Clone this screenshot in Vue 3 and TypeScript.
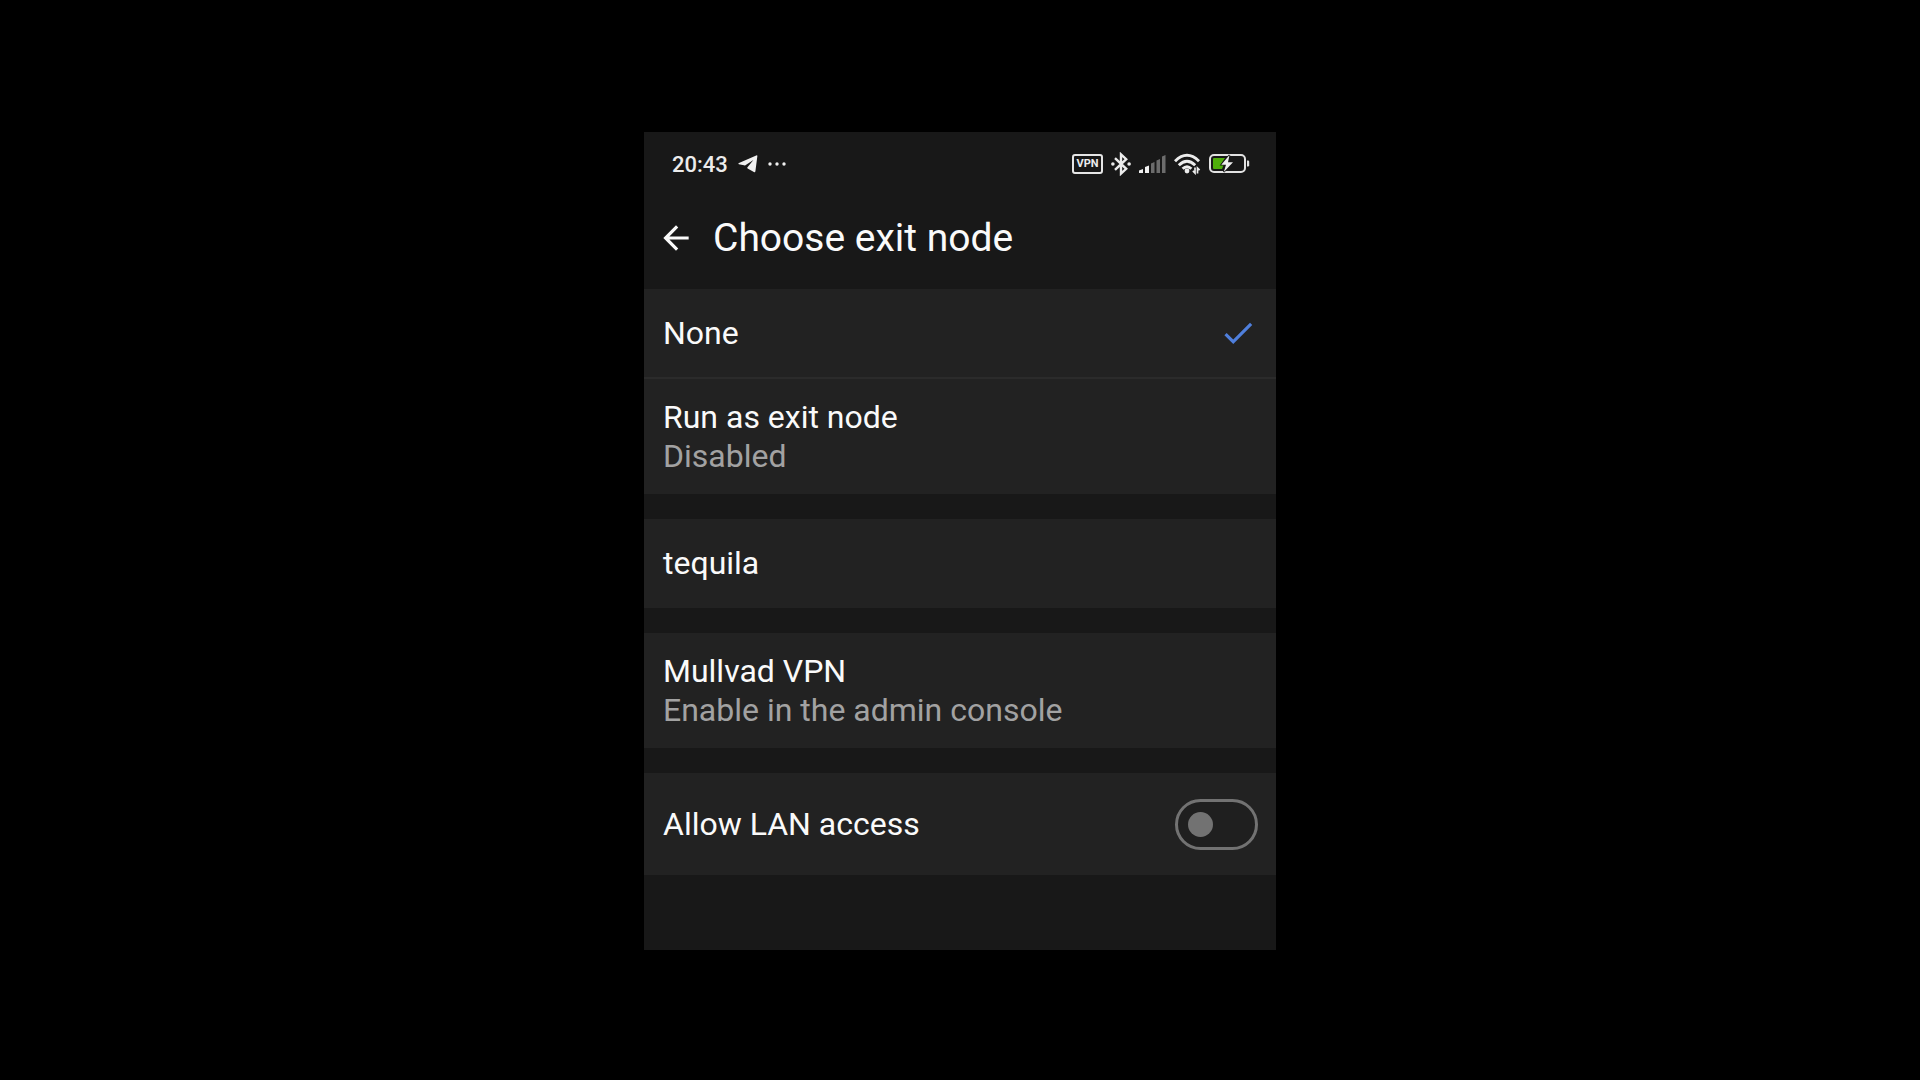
<script setup lang="ts">
import { ref } from 'vue'

interface ExitOption {
  id: string
  title: string
  detail?: string
}

const groups: ExitOption[][] = [
  [
    { id: 'none', title: 'None' },
    { id: 'self', title: 'Run as exit node', detail: 'Disabled' },
  ],
  [{ id: 'tequila', title: 'tequila' }],
  [{ id: 'mullvad', title: 'Mullvad VPN', detail: 'Enable in the admin console' }],
]

const selected = ref('none')
const allowLan = ref(false)
</script>

<template>
  <main class="stage">
    <section class="screen">
      <div class="status">
        <time class="clock">20:43</time>
        <svg class="telegram" width="20" height="18" viewBox="0 0 20 18" aria-hidden="true">
          <path d="M19.4 0.8 L17.4 16.2 Q17.1 17.6 15.9 17 L9.6 13.4 Q8.9 12.9 9.5 12.2 L15.4 5 L7.4 10.2 Q6.8 10.6 6 10.3 L0.8 9.2 Q-0.2 8.5 1 7.9 L18.2 0.4 Q19.5 0 19.4 0.8Z" fill="#f0f0f0" />
        </svg>
        <svg class="dots" width="20" height="4" viewBox="0 0 20 4" aria-hidden="true">
          <g fill="#f0f0f0"><circle cx="2" cy="2" r="1.7" /><circle cx="9" cy="2" r="1.7" /><circle cx="16" cy="2" r="1.7" /></g>
        </svg>
        <div class="indicators">
          <span class="vpn">VPN</span>
          <svg width="20" height="24" viewBox="0 0 20 24" aria-hidden="true">
            <path d="M4 6.2 L15.2 16.8 L10 21.6 V2.4 L15.2 7.2 L4 17.8" fill="none" stroke="#ececec" stroke-width="2.4" stroke-linejoin="miter" />
            <circle cx="1.9" cy="12" r="1.8" fill="#ececec" /><circle cx="18.1" cy="12" r="1.8" fill="#ececec" />
          </svg>
          <svg width="27" height="20" viewBox="0 0 27 20" aria-hidden="true">
            <g fill="#f0f0f0"><path d="M0 16.5 L4 15 V19 H0Z" /><path d="M6 13 L10 11.5 V19 H6Z" /></g>
            <g fill="#6c6c6c"><path d="M12 9.5 L15.5 8 V19 H12Z" /><path d="M17.5 6.5 L21 5 V19 H17.5Z" /><path d="M23 2.5 L26.5 1 V19 H23Z" /></g>
          </svg>
          <svg width="27" height="22" viewBox="0 0 27 22" aria-hidden="true">
            <g fill="none" stroke="#ececec" stroke-width="2.9">
              <path d="M1 8.2 Q13 -3.6 25 8.2" /><path d="M4.8 12.2 Q13 4.2 21.2 12.2" /><path d="M8.6 15.8 Q13 11.6 17.4 15.8" />
            </g>
            <circle cx="13" cy="18" r="2.4" fill="#ececec" />
            <path d="M21 14.5 V20 L18.9 17.8 M23.5 20.5 V15 L25.6 17.2" fill="none" stroke="#ececec" stroke-width="1.7" />
          </svg>
          <svg width="41" height="20" viewBox="0 0 41 20" aria-hidden="true">
            <rect x="1" y="1" width="35" height="17" rx="4" fill="none" stroke="#e2e2e2" stroke-width="2" />
            <path d="M38 6.5 h1 q1.2 0 1.2 1.2 v3.6 q0 1.2 -1.2 1.2 h-1z" fill="#e2e2e2" />
            <path d="M5 4 H16 L12 10 H15 L13 15 H5 Q4 15 4 14 V5 Q4 4 5 4Z" fill="#4fae0b" />
            <path d="M20.5 1 L12.3 10.8 H17 L14.8 18 L24 8.2 H19Z" fill="#f0f0f0" stroke="#181818" stroke-width="1.6" paint-order="stroke" />
          </svg>
        </div>
      </div>

      <header class="bar">
        <button class="back" type="button" aria-label="Back">
          <svg width="38" height="38" viewBox="0 0 24 24" aria-hidden="true">
            <path d="M20 11H7.83l5.59-5.59L12 4l-8 8 8 8 1.41-1.41L7.83 13H20v-2z" fill="#fafafa" />
          </svg>
        </button>
        <h1>Choose exit node</h1>
      </header>

      <div class="groups">
        <div v-for="(group, i) in groups" :key="i" class="group">
          <button v-for="item in group" :key="item.id" type="button" class="row" :class="{ tall: item.detail }" @click="selected = item.id">
            <span class="texts">
              <span class="title">{{ item.title }}</span>
              <span v-if="item.detail" class="detail">{{ item.detail }}</span>
            </span>
            <svg v-if="selected === item.id" width="38" height="38" viewBox="0 0 24 24" aria-hidden="true">
              <path d="M9 16.17L4.83 12l-1.42 1.41L9 19 21 7l-1.41-1.41z" fill="#4f7fdc" />
            </svg>
          </button>
        </div>
        <div class="group">
          <label class="row lan" for="lan">
            <span class="title">Allow LAN access</span>
            <input id="lan" v-model="allowLan" class="switch" type="checkbox" role="switch" />
          </label>
        </div>
      </div>
    </section>
  </main>
</template>

<style>
body {
  margin: 0;
  background: #000;
}
</style>

<style scoped>
.stage {
  box-sizing: border-box;
  min-height: 100vh;
  padding: 132px 16px 0;
  font-family: Roboto, "Liberation Sans", sans-serif;
  color: #fafafa;
}
.screen {
  max-width: 632px;
  margin: 0 auto;
  padding-bottom: 75px;
  background: #181818;
}
svg {
  display: block;
  flex: none;
}
.status {
  display: flex;
  align-items: center;
  height: 64px;
  padding: 0 26px 0 28px;
}
.clock {
  padding-top: 2px;
  font-size: 22px;
  font-weight: 500;
  line-height: 24px;
  color: #ececec;
}
.telegram {
  margin-left: 10px;
}
.dots {
  margin-left: 10px;
}
.indicators {
  display: flex;
  align-items: center;
  gap: 8px;
  margin-left: auto;
}
.vpn {
  box-sizing: border-box;
  width: 31px;
  border: 2px solid #e6e6e6;
  border-radius: 3px;
  font-size: 11px;
  font-weight: 700;
  line-height: 16px;
  text-align: center;
  color: #ececec;
}
.bar {
  display: flex;
  align-items: center;
  gap: 18px;
  padding: 18px 13px 27px;
}
.back {
  padding: 0;
  border: 0;
  background: none;
}
h1 {
  margin: 0;
  font-size: 39px;
  font-weight: 400;
  line-height: 48px;
}
.groups {
  display: flex;
  flex-direction: column;
  gap: 25px;
}
.group {
  background: #222;
}
.row {
  box-sizing: border-box;
  display: flex;
  align-items: center;
  justify-content: space-between;
  width: 100%;
  min-height: 89px;
  padding: 0 19px;
  border: 0;
  background: none;
  font: inherit;
  font-size: 32px;
  line-height: 39px;
  text-align: left;
  color: inherit;
}
.row:not(:last-child) {
  min-height: 90px;
  border-bottom: 2px solid #2b2b2b;
}
.tall {
  min-height: 115px;
}
.lan {
  min-height: 102px;
  padding-right: 18px;
}
.texts {
  display: flex;
  flex-direction: column;
}
.detail {
  color: #a2a2a2;
}
.switch {
  appearance: none;
  box-sizing: border-box;
  display: flex;
  align-items: center;
  width: 83px;
  height: 51px;
  margin: 0;
  padding: 0 10px;
  border: 3px solid #727272;
  border-radius: 26px;
  background: #1f1f1f;
}
.switch::before {
  content: "";
  width: 25px;
  height: 25px;
  border-radius: 50%;
  background: #727272;
}
.switch:checked {
  justify-content: flex-end;
  border-color: #4f7fdc;
}
</style>
